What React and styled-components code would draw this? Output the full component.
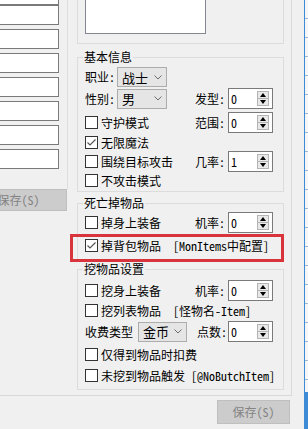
import React from 'react';
import styled, { createGlobalStyle } from 'styled-components';

const FONT = `"Noto Sans Mono CJK SC", "Noto Sans CJK SC", "Liberation Mono", monospace`;

const Global = createGlobalStyle`
  html, body { margin: 0; padding: 0; background: #f0f0f0; }
  body { font-family: ${FONT}; font-size: 12px; color: #000; }
  *, *::before, *::after { box-sizing: border-box; }
`;

const Page = styled.div`
  width: 308px;
  height: 429px;
  overflow: hidden;
  display: flex;
  background: #f0f0f0;
  font-family: ${FONT};
  font-size: 12px;
  line-height: 1;
  color: #000;
`;

const MainCol = styled.div`
  width: 292px;
  display: flex;
  flex-direction: column;
`;

const Panel = styled.div`
  height: 396px;
  display: flex;
  border-right: 1px solid #d9d9d9;
  border-bottom: 1px solid #d9d9d9;
`;

const LeftPane = styled.div`
  width: 68px;
  margin-right: 9px;
  display: flex;
  flex-direction: column;
`;

const BoxStack = styled.div`
  height: 189px;
  border-right: 1px solid #dedede;
  display: flex;
  flex-direction: column;
  gap: 4px;
  overflow: hidden;
`;

const TextBox = styled.div`
  flex: none;
  width: 70px;
  height: 20px;
  margin-left: -11px;
  background: #fff;
  border: 1px solid #7a7a7a;
  &:first-child {
    margin-top: -15px;
    margin-bottom: -4px;
  }
`;

const Button = styled.div`
  height: ${(p) => p.$h}px;
  width: ${(p) => p.$w}px;
  margin-left: ${(p) => p.$ml || 0}px;
  background: #cccccc;
  border: 1px solid #bfbfbf;
  color: #838383;
  display: flex;
  align-items: center;
  justify-content: center;
  white-space: pre;
  font-size: 12px;
`;

const RightCol = styled.div`
  width: 207px;
  display: flex;
  flex-direction: column;
`;

const TopGroup = styled.div`
  height: 44px;
  border: 1px solid #dcdcdc;
  border-top: none;
  padding: 0 0 9px 7px;
  display: flex;
`;

const ListBox = styled.div`
  width: 121px;
  background: #fff;
  border: 1px solid #828790;
  border-top: none;
`;

const Group = styled.fieldset`
  margin: ${(p) => p.$mt}px 0 0 0;
  padding: 0 0 ${(p) => p.$pb}px 7px;
  border: 1px solid #dcdcdc;
  min-width: 0;
`;

const Legend = styled.legend`
  padding: 0 1px;
  margin-left: -2px;
  height: 14px;
  line-height: 14px;
  font-size: 12px;
`;

const Body = styled.div`
  display: flex;
  flex-direction: column;
`;

const Row = styled.div`
  position: relative;
  display: flex;
  align-items: center;
  height: ${(p) => p.$h}px;
  margin-top: ${(p) => p.$mt || 0}px;
  white-space: pre;
`;

const LeftCell = styled.div`
  width: 110px;
  display: flex;
  align-items: center;
`;

const FieldLabel = styled.span`
  width: ${(p) => p.$w}px;
  padding-left: ${(p) => p.$pl || 0}px;
  flex: none;
`;

const Check = styled.label`
  display: flex;
  align-items: center;
  gap: 3px;
`;

const Box = styled.span`
  width: 13px;
  height: 13px;
  flex: none;
  background: #fff;
  border: 1px solid #333;
  display: flex;
  align-items: center;
  justify-content: center;
`;

const ComboBox = styled.div`
  width: ${(p) => p.$w}px;
  height: 20px;
  margin-left: ${(p) => p.$ml || 0}px;
  background: #e5e5e5;
  border: 1px solid #acacac;
  display: flex;
  align-items: center;
  justify-content: space-between;
  padding: 0 4px 0 4px;
  font-size: 13px;
`;

const SpinBox = styled.div`
  width: 45px;
  height: 21px;
  background: #fff;
  border: 1px solid #7a7a7a;
  display: flex;
  align-items: center;
  justify-content: space-between;
  padding: 2px 3px 2px 2px;
`;

const SpinButtons = styled.div`
  width: 12px;
  height: 100%;
  display: flex;
  flex-direction: column;
`;

const SpinBtn = styled.div`
  flex: 1;
  background: #e9e9e9;
  border: 1px solid #b4b4b4;
  & + & { border-top: none; }
  display: flex;
  align-items: center;
  justify-content: center;
  &::after {
    content: '';
    border-left: 3.5px solid transparent;
    border-right: 3.5px solid transparent;
    ${(p) =>
      p.$down
        ? 'border-top: 4px solid #000;'
        : 'border-bottom: 4px solid #000;'}
  }
`;

const Highlight = styled.div`
  position: absolute;
  left: -15px;
  right: -1px;
  top: -2px;
  bottom: -7px;
  border: 3px solid #d7343c;
  pointer-events: none;
`;

const Footer = styled.div`
  display: flex;
  justify-content: flex-end;
  padding: 4px 2px 0 0;
`;

const Strip = styled.div`
  width: 16px;
  display: flex;
`;

const StripGap = styled.div`
  width: 12px;
  background: #f0f0f0;
`;

const BlueLine = styled.div`
  width: 1px;
  background: #3d8ad6;
`;

const Ruler = styled.div`
  width: 3px;
  display: flex;
  flex-direction: column;
  background: repeating-linear-gradient(
    to bottom,
    #f6f6f6 0px,
    #f6f6f6 18px,
    #9db8d3 18px,
    #9db8d3 19px
  );
`;

const RulerFill = styled.div`
  margin-top: auto;
  height: 37px;
  background: #3d8ad6;
`;

const Chevron = () => (
  <svg width="8" height="5" viewBox="0 0 8 5">
    <polyline points="0.5,0.5 4,4 7.5,0.5" fill="none" stroke="#6d6d6d" strokeWidth="1" />
  </svg>
);

const CheckBox = ({ checked, children }) => (
  <Check>
    <Box>
      {checked && (
        <svg width="11" height="11" viewBox="0 0 11 11">
          <polyline points="1.5,5.5 4,8 9.5,2.5" fill="none" stroke="#555" strokeWidth="1.2" />
        </svg>
      )}
    </Box>
    <span>{children}</span>
  </Check>
);

const Combo = ({ value, w, ml }) => (
  <ComboBox $w={w} $ml={ml}>
    <span>{value}</span>
    <Chevron />
  </ComboBox>
);

const Spin = ({ value }) => (
  <SpinBox>
    <span>{value}</span>
    <SpinButtons>
      <SpinBtn />
      <SpinBtn $down />
    </SpinButtons>
  </SpinBox>
);

export default function App() {
  return (
    <>
      <Global />
      <Page>
        <MainCol>
          <Panel>
            <LeftPane>
              <BoxStack>
                {Array.from({ length: 8 }).map((_, i) => (
                  <TextBox key={i} />
                ))}
              </BoxStack>
              <Button $h={22} $w={97} $ml={-30}>保存(S)</Button>
            </LeftPane>
            <RightCol>
              <TopGroup>
                <ListBox />
              </TopGroup>

              <Group $mt={6} $pb={1}>
                <Legend>基本信息</Legend>
                <Body>
                  <Row $h={20} $mt={3}>
                    <FieldLabel $w={32}>职业:</FieldLabel>
                    <Combo value="战士" w={50} />
                  </Row>
                  <Row $h={21} $mt={1}>
                    <LeftCell>
                      <FieldLabel $w={32}>性别:</FieldLabel>
                      <Combo value="男" w={50} />
                    </LeftCell>
                    <FieldLabel $w={33}>发型:</FieldLabel>
                    <Spin value="0" />
                  </Row>
                  <Row $h={21} $mt={3}>
                    <LeftCell>
                      <CheckBox>守护模式</CheckBox>
                    </LeftCell>
                    <FieldLabel $w={33}>范围:</FieldLabel>
                    <Spin value="0" />
                  </Row>
                  <Row $h={19}>
                    <CheckBox checked>无限魔法</CheckBox>
                  </Row>
                  <Row $h={19}>
                    <LeftCell>
                      <CheckBox>围绕目标攻击</CheckBox>
                    </LeftCell>
                    <FieldLabel $w={33}>几率:</FieldLabel>
                    <Spin value="1" />
                  </Row>
                  <Row $h={19}>
                    <CheckBox>不攻击模式</CheckBox>
                  </Row>
                </Body>
              </Group>

              <Group $mt={4} $pb={4}>
                <Legend>死亡掉物品</Legend>
                <Body>
                  <Row $h={21} $mt={2}>
                    <LeftCell>
                      <CheckBox>掉身上装备</CheckBox>
                    </LeftCell>
                    <FieldLabel $w={33}>机率:</FieldLabel>
                    <Spin value="0" />
                  </Row>
                  <Row $h={19} $mt={3}>
                    <CheckBox checked>{'掉背包物品  [MonItems中配置]'}</CheckBox>
                    <Highlight />
                  </Row>
                </Body>
              </Group>

              <Group $mt={2} $pb={4}>
                <Legend>挖物品设置</Legend>
                <Body>
                  <Row $h={21} $mt={4}>
                    <LeftCell>
                      <CheckBox>挖身上装备</CheckBox>
                    </LeftCell>
                    <FieldLabel $w={33}>机率:</FieldLabel>
                    <Spin value="0" />
                  </Row>
                  <Row $h={19}>
                    <CheckBox>{'挖列表物品  [怪物名-Item]'}</CheckBox>
                  </Row>
                  <Row $h={21} $mt={1}>
                    <LeftCell>
                      <FieldLabel $w={52}>收费类型</FieldLabel>
                      <Combo value="金币" w={49} ml={1} />
                    </LeftCell>
                    <FieldLabel $w={33} $pl={2}>点数:</FieldLabel>
                    <Spin value="0" />
                  </Row>
                  <Row $h={19} $mt={3}>
                    <CheckBox>仅得到物品时扣费</CheckBox>
                  </Row>
                  <Row $h={19} $mt={2}>
                    <CheckBox>{'未挖到物品触发 [@NoButchItem]'}</CheckBox>
                  </Row>
                </Body>
              </Group>
            </RightCol>
          </Panel>
          <Footer>
            <Button $h={24} $w={73}>保存(S)</Button>
          </Footer>
        </MainCol>
        <Strip>
          <StripGap />
          <BlueLine />
          <Ruler>
            <RulerFill />
          </Ruler>
        </Strip>
      </Page>
    </>
  );
}
